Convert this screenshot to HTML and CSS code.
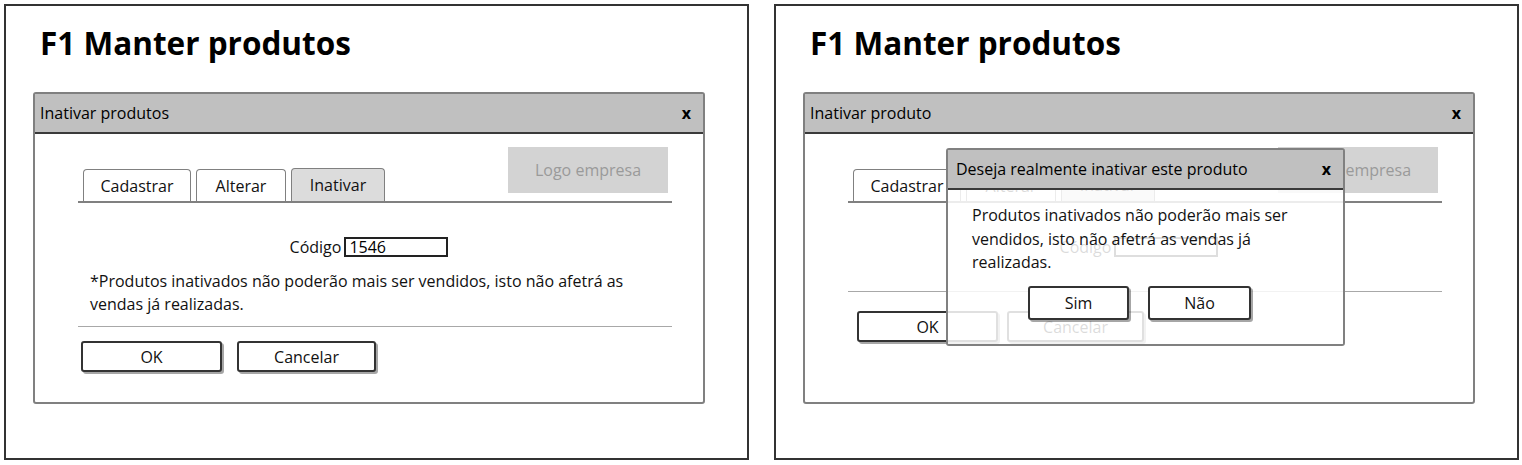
FILE: index.html
```html
<!DOCTYPE html>
<html lang="pt">
<head>
<meta charset="utf-8">
<title>F1 Manter produtos</title>
<link rel="stylesheet" href="styles.css">
</head>
<body>
<div class="page">
  <section class="frame">
    <h1 class="heading">F1 Manter produtos</h1>
    <div class="window">
      <div class="titlebar"><span>Inativar produtos</span><span class="close">x</span></div>
      <div class="tabbar">
        <div class="tab tab-cadastrar">Cadastrar</div>
        <div class="tab tab-alterar">Alterar</div>
        <div class="tab tab-inativar">Inativar</div>
        <div class="logo">Logo empresa</div>
      </div>
      <div class="field"><span class="field-label">Código</span><div class="input">1546</div></div>
      <p class="note">*Produtos inativados não poderão mais ser vendidos, isto não afetrá as<br>vendas já realizadas.</p>
      <div class="sep"></div>
      <div class="actions">
        <button class="btn btn-ok">OK</button>
        <button class="btn btn-cancel">Cancelar</button>
      </div>
    </div>
  </section>
  <section class="frame">
    <h1 class="heading">F1 Manter produtos</h1>
    <div class="window">
      <div class="titlebar"><span>Inativar produto</span><span class="close">x</span></div>
      <div class="tabbar">
        <div class="tab tab-cadastrar">Cadastrar</div>
        <div class="tab tab-alterar">Alterar</div>
        <div class="tab tab-inativar">Inativar</div>
        <div class="logo">Logo empresa</div>
      </div>
      <div class="field"><span class="field-label">Código</span><div class="input"></div></div>
      <div class="sep sep-b"></div>
      <div class="actions actions-b">
        <button class="btn btn-ok">OK</button>
        <button class="btn btn-cancel-b">Cancelar</button>
      </div>
      <div class="modal">
        <div class="modal-title"><span>Deseja realmente inativar este produto</span><span class="close">x</span></div>
        <div class="modal-body">
          <p class="modal-text">Produtos inativados não poderão mais ser<br>vendidos, isto não afetrá as vendas já<br>realizadas.</p>
          <div class="modal-actions">
            <button class="btn btn-sim">Sim</button>
            <button class="btn btn-nao">Não</button>
          </div>
        </div>
      </div>
    </div>
  </section>
</div>
</body>
</html>
```

FILE: styles.css
```css
* { box-sizing: border-box; }

body {
  margin: 0;
  background: #fff;
  font-family: "Open Sans", sans-serif;
  font-size: 16px;
  color: #111;
}

.page {
  display: flex;
  gap: 25px;
  padding: 4px 3px 0 4px;
}

.frame {
  flex: 1;
  height: 456px;
  border: 2px solid #333;
  padding: 17px 0 0 27px;
}

.heading {
  margin: 0 0 29px 7px;
  font-size: 31.5px;
  line-height: 40px;
  font-weight: 700;
  color: #000;
}

.window {
  position: relative;
  width: 672px;
  height: 312px;
  border: 2px solid #808080;
  border-radius: 3px;
}

.titlebar {
  display: flex;
  justify-content: space-between;
  align-items: center;
  height: 40px;
  padding: 0 12px 0 5px;
  background: #c0c0c0;
  border-bottom: 2px solid #3a3a3a;
  color: #000;
}

.close {
  font-weight: 700;
  font-size: 16px;
}

.tabbar {
  display: flex;
  align-items: flex-end;
  gap: 5px;
  margin: 13px 31px 0 43px;
  padding-left: 5px;
  border-bottom: 2px solid #808080;
}

.tab {
  display: flex;
  align-items: center;
  justify-content: center;
  height: 32px;
  border: 1px solid #808080;
  border-bottom: none;
  border-radius: 4px 4px 0 0;
  background: #fff;
}

.tab-cadastrar { width: 108px; }
.tab-alterar { width: 90px; }
.tab-inativar { width: 94px; height: 33px; background: #dcdcdc; }

.logo {
  align-self: flex-start;
  display: flex;
  align-items: center;
  justify-content: center;
  width: 160px;
  height: 46px;
  margin: 0 4px 8px auto;
  background: #d3d3d3;
  color: #9a9a9a;
}

.field {
  display: flex;
  justify-content: center;
  align-items: center;
  gap: 3px;
  margin-top: 33px;
}

.input {
  width: 104px;
  height: 20px;
  border: 2px solid #222;
  padding: 0 3px;
  line-height: 16px;
  color: #000;
}

.note {
  margin: 12px 0 10px 55px;
  line-height: 23px;
}

.sep {
  height: 1px;
  margin: 0 31px 0 43px;
  background: #a8a8a8;
}

.sep-b { margin-top: 33px; }

.actions {
  display: flex;
  gap: 15px;
  margin-top: 14px;
  padding-left: 46px;
}

.actions-b {
  gap: 9px;
  margin-top: 19px;
  padding-left: 52px;
}

.btn {
  height: 31px;
  padding: 0;
  border: 2px solid #333;
  border-radius: 3px;
  background: #fff;
  box-shadow: 2px 2px 0 rgba(0, 0, 0, 0.35);
  font: inherit;
  color: #111;
}

.btn-ok { width: 141px; }
.btn-cancel { width: 139px; }
.btn-cancel-b { width: 137px; }

.modal {
  position: absolute;
  left: 141px;
  top: 54px;
  width: 399px;
  height: 198px;
  border: 2px solid #808080;
  border-radius: 3px;
  display: flex;
  flex-direction: column;
}

.modal-title {
  display: flex;
  justify-content: space-between;
  align-items: center;
  height: 40px;
  padding: 0 12px 0 8px;
  background: #c0c0c0;
  border-bottom: 2px solid #3a3a3a;
  color: #000;
}

.modal-body {
  flex: 1;
  padding: 14px 0 0 24px;
  background: rgba(255, 255, 255, 0.85);
}

.modal-text {
  margin: 0;
  line-height: 23.5px;
}

.modal-actions {
  display: flex;
  gap: 19px;
  margin-top: 11px;
  padding-left: 56px;
}

.btn-sim { width: 101px; height: 34px; }
.btn-nao { width: 103px; height: 34px; }
```
